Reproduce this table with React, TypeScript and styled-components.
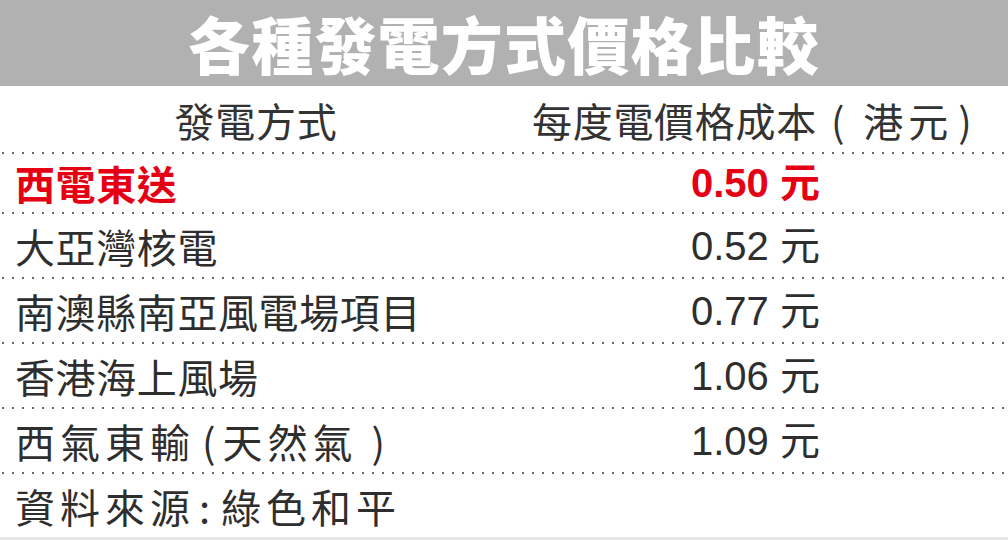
import styled, { createGlobalStyle } from 'styled-components'

interface IPowerRow {
    method: React.ReactNode
    cost: string
    highlight?: boolean
    spaced?: boolean
}

const GlobalStyle = createGlobalStyle`
    html, body {
        margin: 0;
        padding: 0;
        background: #fff;
    }
    body {
        font-family: "Liberation Sans", "Noto Sans CJK TC", sans-serif;
    }
`

const App = () => {
    const rows: IPowerRow[] = [
        { method: '西電東送', cost: '0.50', highlight: true },
        { method: '大亞灣核電', cost: '0.52' },
        { method: '南澳縣南亞風電場項目', cost: '0.77' },
        { method: '香港海上風場', cost: '1.06' },
        {
            method: (
                <>
                    西氣東輸<Punct $before={7} $after={2}>(</Punct>天然氣<Punct $before={14}>)</Punct>
                </>
            ),
            cost: '1.09',
            spaced: true,
        },
    ]

    return (
        <Page>
            <GlobalStyle />
            <TitleBar>各種發電方式價格比較</TitleBar>
            <HeaderRow>
                <HeaderCell>發電方式</HeaderCell>
                <HeaderCell $right>
                    每度電價格成本<Punct $before={14} $after={18}>(</Punct><Wide>港元</Wide><Punct $before={5}>)</Punct>
                </HeaderCell>
            </HeaderRow>
            <Divider />
            {rows.map(({ method, cost, highlight, spaced }, index) => (
                <div key={cost}>
                    <Row $first={index === 0}>
                        <Method $highlight={highlight} $spaced={spaced}>{method}</Method>
                        <Cost $highlight={highlight}>{cost} 元</Cost>
                    </Row>
                    <Divider />
                </div>
            ))}
            <Source>
                資料來源<Punct $before={4} $after={6}>:</Punct>綠色和平
            </Source>
            <BottomEdge />
        </Page>
    )
}

const Page = styled.div`
    width: 1008px;
    height: 540px;
    overflow: hidden;
    display: flex;
    flex-direction: column;
    background: #fff;
`

const TitleBar = styled.h1`
    margin: 0;
    height: 86px;
    flex: none;
    display: flex;
    align-items: center;
    justify-content: center;
    background: #b1b1b1;
    color: #fff;
    font-family: "Noto Sans CJK TC", sans-serif;
    font-weight: 900;
    font-size: 62px;
    line-height: 1;
    letter-spacing: 1.2px;
    white-space: nowrap;
`

const HeaderRow = styled.div`
    height: 66px;
    flex: none;
    display: grid;
    grid-template-columns: 506px 1fr;
    align-items: center;
    padding-top: 2px;
    box-sizing: border-box;
`

const HeaderCell = styled.div<{ $right?: boolean }>`
    font-family: "Noto Sans CJK TC", sans-serif;
    font-size: 40px;
    letter-spacing: 0.7px;
    color: #333;
    white-space: nowrap;
    ${({ $right }) => $right ? 'padding-left: 26px;' : 'text-align: center; padding-left: 6px;'}
`

const Wide = styled.span`
    letter-spacing: 5px;
`

const Punct = styled.span<{ $before?: number; $after?: number }>`
    display: inline-block;
    margin-left: ${({ $before }) => $before ?? 0}px;
    margin-right: ${({ $after }) => $after ?? 0}px;
    font-weight: 400;
`

const Divider = styled.div`
    height: 2px;
    flex: none;
    background-image: linear-gradient(to right, #6a6a6a 2px, transparent 2px);
    background-size: 10px 2px;
    background-repeat: repeat-x;
    background-position: 2px 0;
`

const Row = styled.div<{ $first?: boolean }>`
    height: ${({ $first }) => $first ? '58px' : '63px'};
    display: grid;
    grid-template-columns: 506px 1fr;
    align-items: center;
`

const Method = styled.div<{ $highlight?: boolean; $spaced?: boolean }>`
    padding-left: 15px;
    font-family: "Noto Sans CJK TC", sans-serif;
    font-size: 40px;
    letter-spacing: ${({ $spaced }) => $spaced ? '5px' : '0.6px'};
    font-weight: ${({ $highlight }) => $highlight ? 700 : 400};
    color: ${({ $highlight }) => $highlight ? '#e50014' : '#2e2e2e'};
    white-space: nowrap;
    line-height: 1;
`

const Cost = styled.div<{ $highlight?: boolean }>`
    padding-left: 185px;
    font-family: "Liberation Sans", "Noto Sans CJK TC", sans-serif;
    font-size: 40px;
    font-weight: ${({ $highlight }) => $highlight ? 700 : 400};
    color: ${({ $highlight }) => $highlight ? '#e50014' : '#2e2e2e'};
    white-space: nowrap;
    line-height: 1;
`

const Source = styled.div`
    height: 63px;
    flex: none;
    display: flex;
    align-items: center;
    padding-left: 15px;
    font-family: "Noto Sans CJK TC", sans-serif;
    font-size: 40px;
    letter-spacing: 5px;
    color: #2e2e2e;
    white-space: nowrap;
`

const BottomEdge = styled.div`
    flex: 1;
    background: #e6e6e6;
`

export default App
